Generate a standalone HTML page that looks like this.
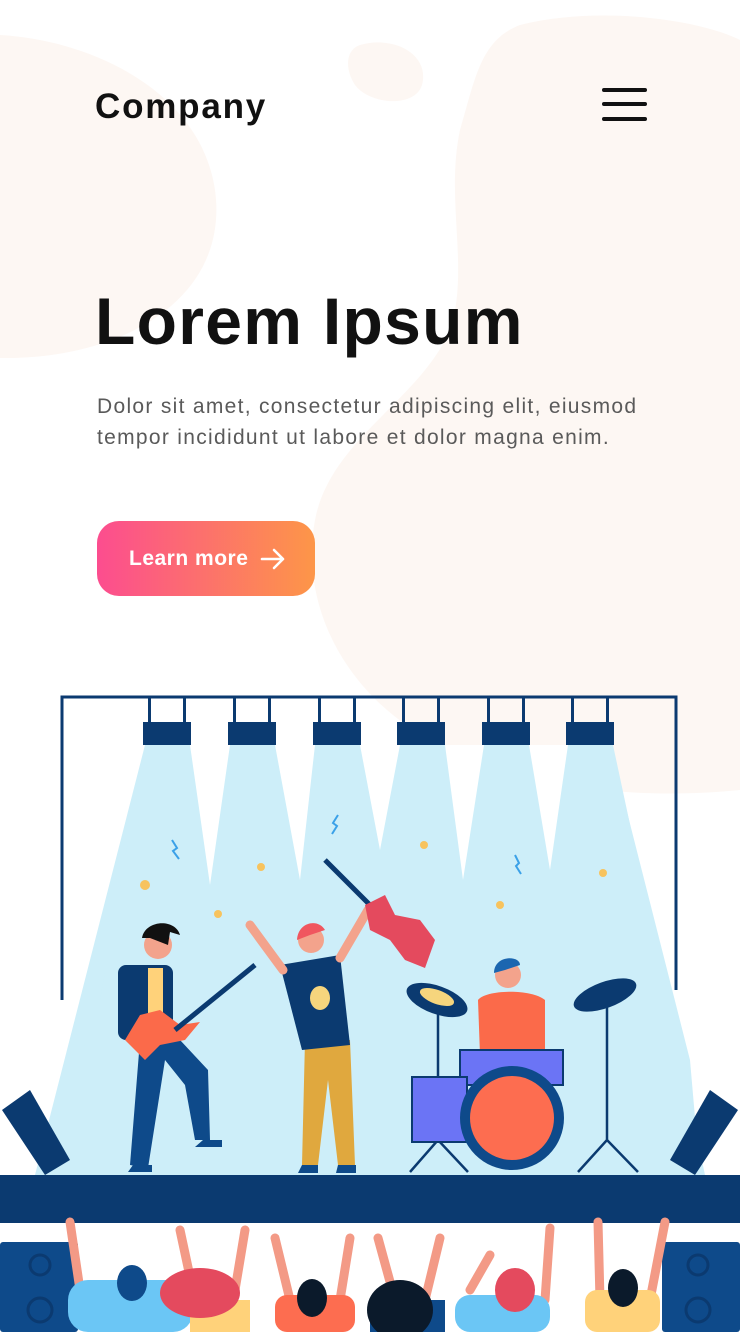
<!DOCTYPE html>
<html><head><meta charset="utf-8"><style>
html,body{margin:0;padding:0}
body{width:740px;height:1332px;position:relative;overflow:hidden;background:#fff;font-family:"Liberation Sans",sans-serif}
.abs{position:absolute}
</style></head><body>
<svg class="abs" style="left:0;top:0" width="740" height="1332" viewBox="0 0 740 1332">
<path d="M0 35 C90 40 200 90 215 190 C230 300 120 360 0 358 Z" fill="#fdf7f3"/>
<path d="M360 45 C395 35 430 55 422 85 C415 108 370 105 355 85 C345 70 345 50 360 45Z" fill="#fdf7f3"/>
<path d="M520 25 C600 5 700 20 740 40 L740 790 C640 800 520 790 430 740 C340 690 300 600 315 520 C330 440 420 400 450 330 C470 270 445 200 460 130 C475 80 480 40 520 25Z" fill="#fdf7f3"/>
<path d="M62 1000 V697 H676 V990" fill="none" stroke="#0b3a70" stroke-width="3"/>
<g fill="#0b3a70">
<g id="L"><rect x="148" y="697" width="3" height="25"/><rect x="183" y="697" width="3" height="25"/><rect x="143" y="722" width="48" height="23"/></g>
<use href="#L" x="85"/><use href="#L" x="170"/><use href="#L" x="254"/><use href="#L" x="339"/><use href="#L" x="423"/>
</g>
<g fill="#cdeef9">
<path d="M145 745 H190 L210 900 L150 1175 H35 Z"/>
<path d="M230 745 H275 L300 880 L240 1175 H170 Z"/>
<path d="M315 745 H360 L385 850 L330 1175 H230 Z"/>
<path d="M400 745 H445 L470 880 L430 1175 H300 Z"/>
<path d="M484 745 H529 L555 860 L520 1175 H400 Z"/>
<path d="M568 745 H613 L705 1175 H480 Z"/>
<path d="M100 1000 L145 745 H610 L690 1060 L700 1175 H40 Z"/>
</g>
<path d="M190 745 L210 885 L230 745 Z M275 745 L300 880 L315 745 Z M360 745 L380 850 L400 745Z M445 745 L463 880 L484 745Z M529 745 L550 870 L568 745Z" fill="#fff"/>
<rect x="0" y="1175" width="740" height="48" fill="#0b3a70"/>
<path d="M2 1110 L30 1090 L70 1160 L45 1175 Z" fill="#0b3a70"/>
<path d="M738 1110 L710 1090 L670 1160 L695 1175 Z" fill="#0b3a70"/>
<g>
<path d="M140 1040 L130 1165 L148 1168 L165 1060 L185 1085 L195 1140 L210 1140 L208 1070 L180 1040 Z" fill="#0e4a8a"/>
<rect x="118" y="965" width="55" height="75" rx="8" fill="#0b3a70"/>
<rect x="148" y="968" width="15" height="50" fill="#ffd27a"/>
<circle cx="158" cy="945" r="14" fill="#f3a38c"/>
<path d="M142 938 C145 920 175 918 180 935 L170 932 L168 945 L150 938 Z" fill="#111"/>
<path d="M125 1040 L140 1015 L160 1010 L180 1025 L200 1022 L185 1040 L160 1045 L145 1060 Z" fill="#fb6a4a"/>
<path d="M175 1030 L255 965" stroke="#0b3a70" stroke-width="5"/>
<path d="M203 1140 H222 V1147 H195Z M133 1165 H152 V1172 H128Z" fill="#0e4a8a"/>
</g>
<g>
<path d="M305 1040 L302 1165 L318 1165 L328 1080 L338 1165 L355 1165 L350 1040 Z" fill="#e0a83e"/>
<path d="M280 965 L340 955 L350 1045 L302 1050 Z" fill="#0b3a70"/>
<ellipse cx="320" cy="998" rx="10" ry="12" fill="#f6d57d"/>
<circle cx="311" cy="940" r="13" fill="#f3a38c"/>
<path d="M297 940 C298 922 318 918 325 930 L310 935 Z" fill="#f0565f"/>
<path d="M283 970 L250 925 M340 958 L368 910" stroke="#f3a38c" stroke-width="9" stroke-linecap="round"/>
<path d="M325 860 L400 935" stroke="#0b3a70" stroke-width="5"/>
<path d="M365 905 L385 895 L395 915 L420 920 L435 940 L425 968 L405 960 L390 940 L370 930 Z" fill="#e44a5e"/>
<path d="M302 1165 H318 V1173 H298Z M338 1165 H356 V1173 H336Z" fill="#0e4a8a"/>
</g>
<g>
<circle cx="508" cy="975" r="13" fill="#f3a38c"/>
<path d="M494 973 C494 955 520 955 520 965 L505 970 Z" fill="#1b66b0"/>
<path d="M478 1000 C485 990 530 988 545 1000 L545 1055 H480 Z" fill="#fb6a4a"/>
<ellipse cx="437" cy="1000" rx="32" ry="14" fill="#0b3a70" transform="rotate(20 437 1000)"/>
<ellipse cx="437" cy="997" rx="18" ry="7" fill="#f6d57d" transform="rotate(20 437 997)"/>
<ellipse cx="605" cy="995" rx="33" ry="13" fill="#0b3a70" transform="rotate(-20 605 995)"/>
<path d="M438 1005 V1140 L410 1172 M438 1140 L468 1172 M607 1005 V1140 L578 1172 M607 1140 L638 1172" stroke="#0b3a70" stroke-width="2.5" fill="none"/>
<rect x="460" y="1050" width="103" height="35" fill="#6b74f5" stroke="#0b3a70" stroke-width="2"/>
<rect x="412" y="1077" width="55" height="65" fill="#6b74f5" stroke="#0b3a70" stroke-width="2"/>
<circle cx="512" cy="1118" r="52" fill="#0e4a8a"/>
<circle cx="512" cy="1118" r="42" fill="#fd6d50"/>
</g>
<g fill="#f7c35e">
<circle cx="145" cy="885" r="5"/><circle cx="261" cy="867" r="4"/><circle cx="218" cy="914" r="4"/><circle cx="424" cy="845" r="4"/><circle cx="500" cy="905" r="4"/><circle cx="603" cy="873" r="4"/>
</g>
<path d="M172 840 l5 8 -4 3 6 8 M338 815 l-5 8 4 3 -5 8 M515 855 l4 8 -3 3 5 8" stroke="#3ba1e8" stroke-width="2" fill="none"/>
<rect x="0" y="1242" width="78" height="90" rx="3" fill="#0e4a8a"/>
<rect x="662" y="1242" width="78" height="90" rx="3" fill="#0e4a8a"/>
<g fill="none" stroke="#f39a86" stroke-width="9" stroke-linecap="round">
<path d="M70 1222 L80 1290 M180 1230 L195 1300 M245 1230 L235 1290 M275 1238 L290 1300 M350 1238 L340 1300 M378 1238 L395 1300 M440 1238 L425 1300 M490 1255 L470 1290 M550 1228 L545 1300 M598 1222 L600 1300 M665 1222 L650 1300"/>
</g>
<rect x="68" y="1280" width="125" height="52" rx="20" fill="#6bc6f5"/>
<ellipse cx="132" cy="1283" rx="15" ry="18" fill="#0e4a8a"/>
<rect x="190" y="1300" width="60" height="32" fill="#ffd27a"/>
<ellipse cx="200" cy="1293" rx="40" ry="25" fill="#e44a5e"/>
<rect x="275" y="1295" width="80" height="37" rx="12" fill="#fd6d50"/>
<ellipse cx="312" cy="1298" rx="15" ry="19" fill="#0b1a2b"/>
<rect x="370" y="1300" width="75" height="32" fill="#0e4a8a"/>
<ellipse cx="400" cy="1310" rx="33" ry="30" fill="#0b1a2b"/>
<rect x="455" y="1295" width="95" height="37" rx="15" fill="#6bc6f5"/>
<ellipse cx="515" cy="1290" rx="20" ry="22" fill="#e44a5e"/>
<rect x="585" y="1290" width="75" height="42" rx="12" fill="#ffd27a"/>
<ellipse cx="623" cy="1288" rx="15" ry="19" fill="#0b1a2b"/>
<g fill="none" stroke="#0b3a70" stroke-width="3"><circle cx="40" cy="1265" r="10"/><circle cx="40" cy="1310" r="12"/><circle cx="698" cy="1265" r="10"/><circle cx="698" cy="1310" r="12"/></g>
</svg>
<div class="abs" style="left:95px;top:87px;font-size:35px;font-weight:bold;color:#111;letter-spacing:1.8px">Company</div>
<div class="abs" style="left:602px;top:88px;width:45px;height:4px;background:#111;border-radius:2px"></div>
<div class="abs" style="left:602px;top:102px;width:45px;height:4px;background:#111;border-radius:2px"></div>
<div class="abs" style="left:602px;top:117px;width:45px;height:4px;background:#111;border-radius:2px"></div>
<div class="abs" style="left:95px;top:283px;font-size:66px;font-weight:bold;color:#111;letter-spacing:1.3px">Lorem Ipsum</div>
<div class="abs" style="left:97px;top:391px;font-size:21px;line-height:31px;color:#5a5a5a;width:640px;letter-spacing:1.3px;white-space:nowrap">Dolor sit amet, consectetur adipiscing elit, eiusmod<br>tempor incididunt ut labore et dolor magna enim.</div>
<div class="abs" style="left:97px;top:521px;width:218px;height:75px;border-radius:22px;background:linear-gradient(90deg,#fc4d8f,#fd9648);color:#fff;font-size:21px;font-weight:bold;line-height:75px">
<span style="position:absolute;left:32px;letter-spacing:0.5px">Learn more</span>
<svg style="position:absolute;left:163px;top:26px" width="26" height="24" viewBox="0 0 26 24"><path d="M2 12 H23 M14 3 L23 12 L14 21" stroke="#fff" stroke-width="2.6" fill="none" stroke-linecap="round" stroke-linejoin="round"/></svg>
</div>
</body></html>
